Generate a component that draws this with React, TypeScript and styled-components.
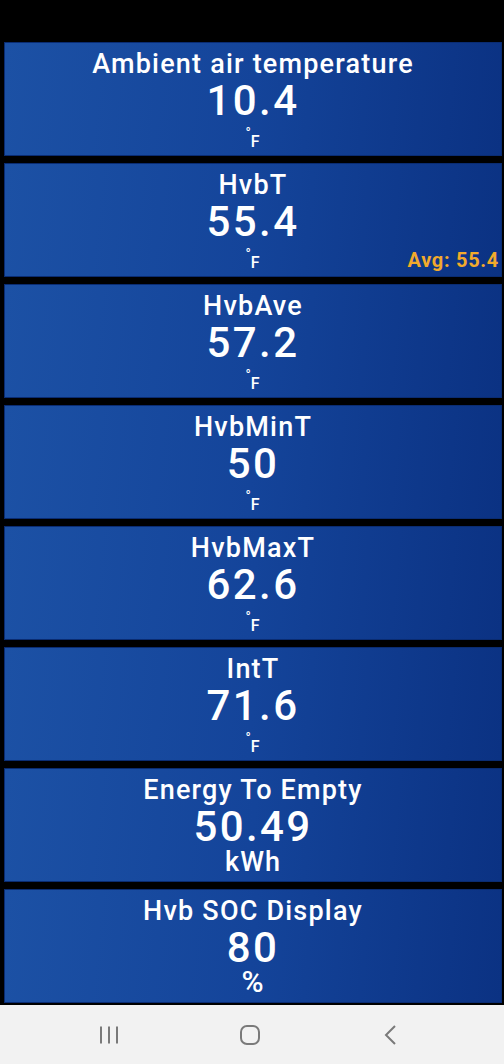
import styled, { createGlobalStyle } from "styled-components";

const GlobalStyle = createGlobalStyle`
  html, body {
    margin: 0;
    padding: 0;
    background: #000;
  }
  body {
    font-family: Roboto, "Noto Sans", sans-serif;
  }
`;

const Screen = styled.div`
  width: 504px;
  height: 1064px;
  background: #000;
  display: flex;
  flex-direction: column;
  overflow: hidden;
`;

const StatusBar = styled.div`
  height: 42px;
  flex: none;
`;

const List = styled.div`
  display: flex;
  flex-direction: column;
  gap: 7px;
  padding: 0 2px 0 4px;
`;

const Card = styled.div`
  position: relative;
  height: 114px;
  box-sizing: border-box;
  border: 1px solid #0a2c72;
  background: linear-gradient(95deg, #1c51a5 0%, #14449a 50%, #0b3283 100%);
  display: flex;
  flex-direction: column;
  align-items: center;
  padding-top: 6px;
  color: #fff;
`;

const Title = styled.div`
  font-size: 27px;
  line-height: 30px;
  font-weight: 500;
  letter-spacing: 1.2px;
  white-space: nowrap;
`;

const Value = styled.div`
  font-size: 42px;
  line-height: 42px;
  font-weight: 500;
  letter-spacing: 2.4px;
  margin-top: 1px;
`;

const UnitBox = styled.div`
  height: 28px;
  display: flex;
  align-items: flex-end;
`;

const Unit = styled.div<{ $size: number }>`
  font-size: ${(p) => p.$size}px;
  line-height: ${(p) => p.$size}px;
  font-weight: 500;
  letter-spacing: 1px;
  display: flex;
  align-items: flex-end;
`;

const Degree = styled.span`
  font-size: 14px;
  line-height: 10px;
  align-self: flex-start;
  margin-top: -6px;
  letter-spacing: 0;
`;

const Avg = styled.div`
  position: absolute;
  right: 2px;
  bottom: 4px;
  font-size: 20px;
  font-weight: 700;
  letter-spacing: 0.7px;
  color: #f2aa2c;
`;

const NavBar = styled.div`
  margin-top: auto;
  height: 59px;
  background: #f2f2f2;
  display: flex;
  align-items: center;
  justify-content: center;
  gap: 117px;
  padding-right: 4px;
`;

const NavIcon = styled.svg`
  width: 24px;
  height: 24px;
  color: #7a7a7a;
`;

type Reading = {
  title: string;
  value: string;
  unit: string;
  unitSize: number;
  avg?: string;
};

const readings: Reading[] = [
  { title: "Ambient air temperature", value: "10.4", unit: "°F", unitSize: 16 },
  { title: "HvbT", value: "55.4", unit: "°F", unitSize: 16, avg: "Avg: 55.4" },
  { title: "HvbAve", value: "57.2", unit: "°F", unitSize: 16 },
  { title: "HvbMinT", value: "50", unit: "°F", unitSize: 16 },
  { title: "HvbMaxT", value: "62.6", unit: "°F", unitSize: 16 },
  { title: "IntT", value: "71.6", unit: "°F", unitSize: 16 },
  { title: "Energy To Empty", value: "50.49", unit: "kWh", unitSize: 27 },
  { title: "Hvb SOC Display", value: "80", unit: "%", unitSize: 30 },
];

function UnitLabel({ unit, size }: { unit: string; size: number }) {
  if (unit === "°F") {
    return (
      <Unit $size={size}>
        <Degree>°</Degree>
        <span>F</span>
      </Unit>
    );
  }
  return <Unit $size={size}>{unit}</Unit>;
}

export default function App() {
  return (
    <Screen>
      <GlobalStyle />
      <StatusBar />
      <List>
        {readings.map((r) => (
          <Card key={r.title}>
            <Title>{r.title}</Title>
            <Value>{r.value}</Value>
            <UnitBox>
              <UnitLabel unit={r.unit} size={r.unitSize} />
            </UnitBox>
            {r.avg && <Avg>{r.avg}</Avg>}
          </Card>
        ))}
      </List>
      <NavBar>
        <NavIcon viewBox="0 0 24 24" fill="none" stroke="currentColor" strokeWidth="2">
          <path d="M4 3.5v17M12 3.5v17M20 3.5v17" />
        </NavIcon>
        <NavIcon viewBox="0 0 24 24" fill="none" stroke="currentColor" strokeWidth="2">
          <rect x="3" y="3" width="18" height="18" rx="6" />
        </NavIcon>
        <NavIcon viewBox="0 0 24 24" fill="none" stroke="currentColor" strokeWidth="2">
          <path d="M16 3l-9 9 9 9" />
        </NavIcon>
      </NavBar>
    </Screen>
  );
}
